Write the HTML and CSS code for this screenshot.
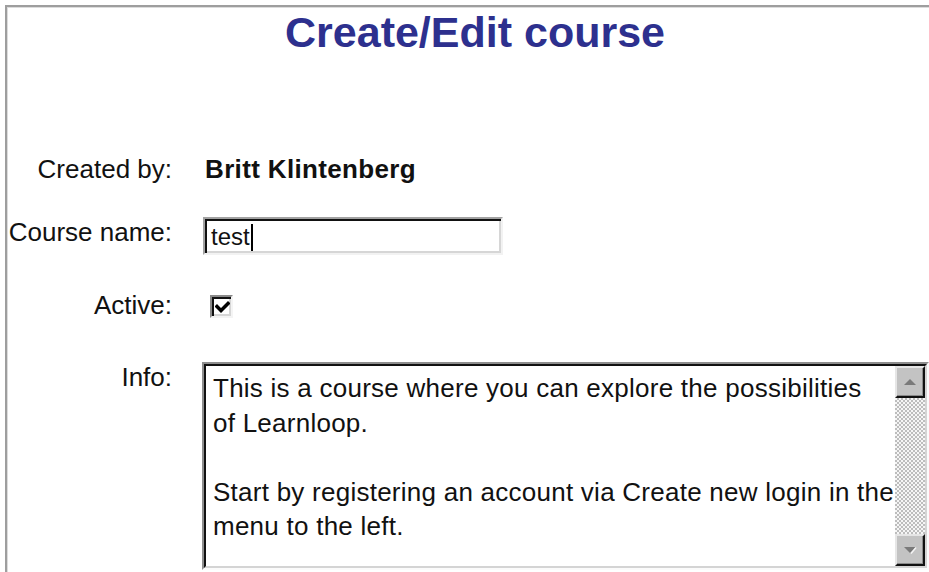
FILE: index.html
```html
<!DOCTYPE html>
<html lang="en">
<head>
<meta charset="utf-8">
<title>Create/Edit course</title>
<link rel="stylesheet" href="styles.css">
</head>
<body>
<div class="frame">
  <h1 class="title">Create/Edit course</h1>

  <form class="course-form">
    <div class="row row-created">
      <span class="label">Created by:</span>
      <span class="author">Britt Klintenberg</span>
    </div>

    <div class="row row-name">
      <label class="label">Course name:</label>
      <div class="textbox"><span class="textbox-value">test</span><span class="caret"></span></div>
    </div>

    <div class="row row-active">
      <label class="label">Active:</label>
      <div class="checkbox">
        <svg class="check" viewBox="0 0 15 15" width="15" height="15">
          <polyline points="2,6.5 6,10.5 13,3.5" fill="none" stroke="#000" stroke-width="3.4" stroke-linecap="square"/>
        </svg>
      </div>
    </div>

    <div class="row row-info">
      <label class="label">Info:</label>
      <div class="memo">
        <div class="memo-inner">
          <div class="memo-text">This is a course where you can explore the possibilities<br>of Learnloop.<br><br>Start by registering an account via Create new login in the<br>menu to the left.</div>
          <div class="scrollbar">
            <div class="scroll-btn">
              <svg viewBox="0 0 14 8" width="14" height="8">
                <polygon points="1,7 7,1 13,7" fill="#7a7a7a"/>
              </svg>
            </div>
            <div class="scroll-track"></div>
            <div class="scroll-btn">
              <svg viewBox="0 0 14 8" width="14" height="8">
                <polygon points="1,1 13,1 7,7" fill="#7a7a7a"/>
                <line x1="13" y1="1.5" x2="8" y2="7.5" stroke="#f4f4f4" stroke-width="1.5"/>
              </svg>
            </div>
          </div>
        </div>
      </div>
    </div>
  </form>
</div>
</body>
</html>
```

FILE: styles.css
```css
html, body {
  margin: 0;
  padding: 0;
  background: #fff;
  overflow: hidden;
}

body {
  font-family: "Liberation Sans", Arial, sans-serif;
  color: #111;
}

/* outer page frame: only its top and left edges show */
.frame {
  margin: 5px 0 0 5px;
  padding: 1px 0 0 1px;
  width: 934px;
  height: 564px;
  border-top: 2px solid #9e9e9e;
  border-left: 2px solid #9e9e9e;
  box-shadow: inset 1px 1px 0 #dcdcdc;
}

.title {
  margin: 0;
  font-size: 43px;
  line-height: 48px;
  font-weight: bold;
  text-align: center;
  color: #2d308e;
}

.course-form {
  margin: 0;
}

.row {
  display: grid;
  grid-template-columns: 164px 1fr;
  column-gap: 31px;
  align-items: start;
}

.label {
  font-size: 26px;
  line-height: 34px;
  text-align: right;
  white-space: nowrap;
}

.row-created { margin-top: 96px; }
.row-name    { margin-top: 29px; }
.row-active  { margin-top: 33px; }
.row-info    { margin-top: 38px; }

.author {
  padding-left: 2px;
  font-size: 26px;
  line-height: 34px;
  font-weight: bold;
  letter-spacing: 0.35px;
  white-space: nowrap;
}

/* sunken single-line text field */
.textbox {
  margin-top: 2px;
  width: 300px;
  height: 38px;
  box-sizing: border-box;
  border: 2px solid;
  border-color: #a2a2a2 #f2f2f2 #f2f2f2 #a2a2a2;
  box-shadow: inset 2px 2px 0 #111, inset -2px -2px 0 #d6d6d6;
  padding: 2px 0 0 6px;
  display: flex;
  align-items: center;
  font-size: 24px;
  line-height: 30px;
  color: #111;
}

.caret {
  display: inline-block;
  width: 2px;
  height: 27px;
  margin-left: 1px;
  background: #000;
}

/* sunken checkbox */
.checkbox {
  margin: 7px 0 0 7px;
  width: 23px;
  height: 23px;
  box-sizing: border-box;
  border: 2px solid;
  border-color: #8a8a8a #f4f4f4 #f4f4f4 #8a8a8a;
  box-shadow: inset 2px 2px 0 #111, inset -2px -2px 0 #d6d6d6;
  background: #fff;
  display: flex;
  align-items: center;
  justify-content: center;
}

.check {
  display: block;
  margin: 1px 0 0 1px;
}

/* multi-line info box with its scrollbar */
.memo {
  margin: 2px 0 0 -1px;
  width: 727px;
  height: 208px;
  box-sizing: border-box;
  border: 2px solid;
  border-color: #8e8e8e #fbfbfb #fbfbfb #8e8e8e;
  display: flex;
}

.memo-inner {
  flex: 1;
  display: flex;
  border: 2px solid;
  border-color: #111 #d4d4d4 #d4d4d4 #111;
  background: #fff;
}

.memo-text {
  flex: 1;
  padding: 5px 0 0 7px;
  font-size: 26px;
  line-height: 34.5px;
  letter-spacing: 0.25px;
  white-space: nowrap;
  overflow: hidden;
  color: #111;
}

.scrollbar {
  width: 30px;
  display: flex;
  flex-direction: column;
}

.scroll-btn {
  height: 32px;
  box-sizing: border-box;
  background: #c3c3c3;
  border: 2px solid;
  border-color: #e6e6e6 #111 #111 #e6e6e6;
  box-shadow: inset -1px -1px 0 #8a8a8a;
  display: flex;
  align-items: center;
  justify-content: center;
}

.scroll-btn svg {
  display: block;
}

.scroll-track {
  flex: 1;
  background-color: #ececec;
  background-image: repeating-conic-gradient(#bdbdbd 0 25%, #f6f6f6 0 50%);
  background-size: 4px 4px;
}
```
